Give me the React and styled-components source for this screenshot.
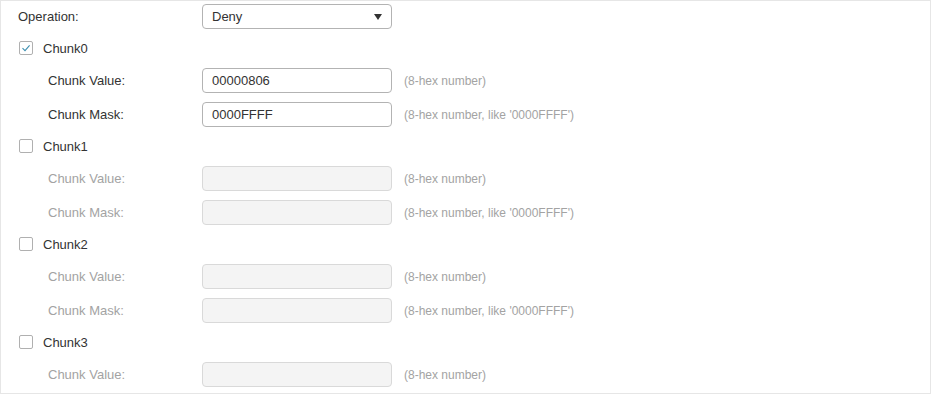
import React, { useState } from 'react';
import styled, { createGlobalStyle } from 'styled-components';

const GlobalStyle = createGlobalStyle`
  html, body {
    margin: 0;
    padding: 0;
    background: #fff;
  }
  body {
    font-family: 'Liberation Sans', Arial, sans-serif;
    font-size: 13px;
    color: #333;
  }
`;

const chunks = [
  { name: 'Chunk0', checked: true, value: '00000806', mask: '0000FFFF' },
  { name: 'Chunk1', checked: false, value: '', mask: '' },
  { name: 'Chunk2', checked: false, value: '', mask: '' },
  { name: 'Chunk3', checked: false, value: '', mask: '', noMask: true },
];

const App = () => {
  const [items, setItems] = useState(chunks);

  const toggle = idx => {
    setItems(items.map((c, i) => (i === idx ? { ...c, checked: !c.checked } : c)));
  };

  return (
    <>
      <GlobalStyle />
      <Panel>
        <Row>
          <Label>Operation:</Label>
          <Select>
            <span>Deny</span>
            <Caret />
          </Select>
        </Row>
        {items.map((c, i) => (
          <Group key={c.name}>
            <CheckRow onClick={() => toggle(i)}>
              <Box checked={c.checked}>
                {c.checked && (
                  <svg width="10" height="10" viewBox="0 0 10 10">
                    <path d="M1.5 5.2 L4 7.6 L8.6 2.4" fill="none" stroke="#3d8fb0" strokeWidth="1.1" />
                  </svg>
                )}
              </Box>
              <CheckText>{c.name}</CheckText>
            </CheckRow>
            <Row>
              <Label indent disabled={!c.checked}>Chunk Value:</Label>
              <Input disabled={!c.checked} defaultValue={c.value} />
              <Hint>(8-hex number)</Hint>
            </Row>
            {!c.noMask && (
              <Row>
                <Label indent disabled={!c.checked}>Chunk Mask:</Label>
                <Input disabled={!c.checked} defaultValue={c.mask} />
                <Hint>(8-hex number, like '0000FFFF')</Hint>
              </Row>
            )}
          </Group>
        ))}
      </Panel>
    </>
  );
};

const Panel = styled.div`
  box-sizing: border-box;
  width: 931px;
  height: 394px;
  border: 1px solid #e6e6e6;
  padding: 3px 0 0 17px;
  display: flex;
  flex-direction: column;
  gap: 9px;
  overflow: hidden;
`;

const Group = styled.div`
  display: flex;
  flex-direction: column;
  gap: 9px;
`;

const Row = styled.div`
  display: flex;
  align-items: center;
  height: 25px;
`;

const Label = styled.div`
  width: 184px;
  padding-left: ${props => (props.indent ? '30px' : '0')};
  box-sizing: border-box;
  color: ${props => (props.disabled ? '#a3a3a3' : '#333')};
`;

const Select = styled.div`
  box-sizing: border-box;
  width: 190px;
  height: 25px;
  border: 1px solid #b3b3b3;
  border-radius: 4px;
  display: flex;
  align-items: center;
  justify-content: space-between;
  padding: 0 9px 0 9px;
  color: #333;
  font-size: 13px;
`;

const Caret = styled.span`
  width: 0;
  height: 0;
  border-left: 4.5px solid transparent;
  border-right: 4.5px solid transparent;
  border-top: 6px solid #333;
  margin-top: 1px;
`;

const CheckRow = styled.label`
  display: flex;
  align-items: center;
  height: 14px;
  margin: 3px 0 4px 1px;
  cursor: pointer;
`;

const Box = styled.span`
  box-sizing: border-box;
  width: 14px;
  height: 14px;
  border: 1px solid #b0b0b0;
  border-radius: 2px;
  background: #fff;
  display: flex;
  align-items: center;
  justify-content: center;
`;

const CheckText = styled.span`
  margin-left: 10px;
  color: #333;
`;

const Input = styled.input`
  box-sizing: border-box;
  width: 190px;
  height: 25px;
  margin: 0;
  border: 1px solid ${props => (props.disabled ? '#d9d9d9' : '#b3b3b3')};
  border-radius: 4px;
  background: ${props => (props.disabled ? '#f4f4f4' : '#fff')};
  padding: 0 9px;
  font-family: 'Liberation Sans', Arial, sans-serif;
  font-size: 13px;
  color: #333;
  outline: none;
`;

const Hint = styled.span`
  margin-left: 12px;
  color: #a3a3a3;
  font-size: 12px;
`;

export default App;
